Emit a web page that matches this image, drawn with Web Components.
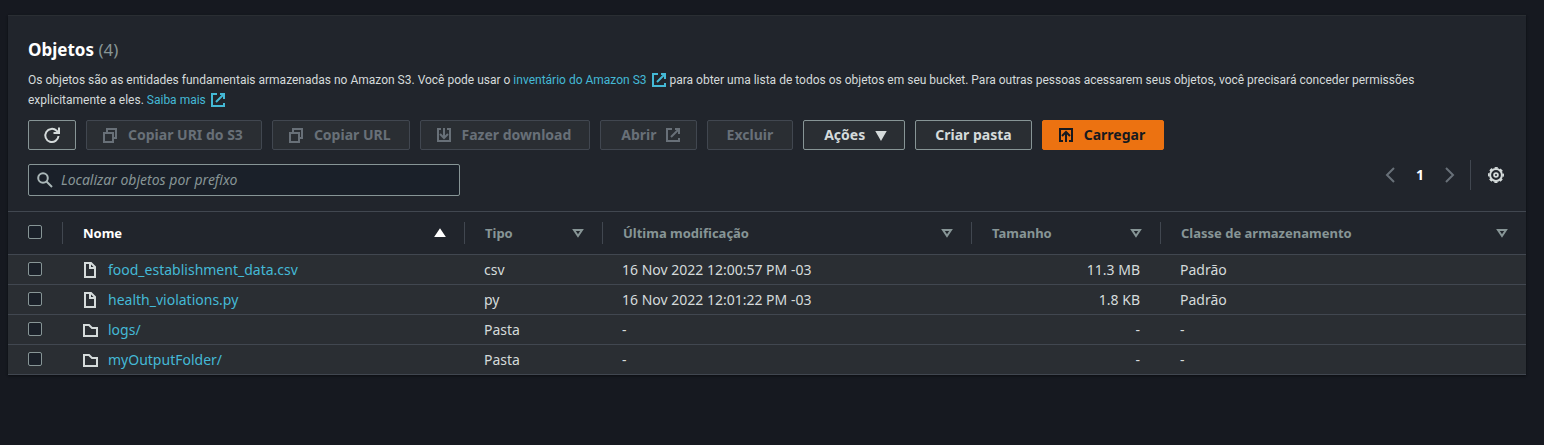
<!DOCTYPE html>
<html lang="pt-BR">
<head>
<meta charset="utf-8">
<title>Objetos do bucket</title>
<style>
body {
  margin: 0;
  padding: 15px 18px 20px 8px;
  background: #161920;
  color: #d5dbdb;
  font: 14px/20px "Noto Sans", sans-serif;
}
</style>
</head>
<body>
<objects-panel></objects-panel>

<script>
const ICONS = {
  refresh: '<path d="M14.500 9A6.600 6.600 0 1 1 12.600 3.800L14 5.200"/><path d="M15 .5v5.500h-5.500"/>',
  copy: '<path d="M2 6h9v9H2z"/><path d="M5 6V2h9v9h-3"/>',
  download: '<path d="M5 2H2v12h12V2h-3"/><path d="M8 1v9M4 7l4 4 4-4"/>',
  external: '<path d="M7 2H2v12h12v-3"/><path d="M10 2h4v5M14 2L6 10"/>',
  upload: '<path d="M5 14H2V2h12v12h-3"/><path d="M8 15V6M4 9l4-4 4 4"/>',
  search: '<circle cx="6" cy="6" r="4.800"/><path d="M9.500 9.500l5.500 5.500"/>',
  file: '<path d="M3 1h6l4 4v10H3z"/><path d="M8 1v5h5"/>',
  folder: '<path d="M2 14V3h5l3 3h5v8z"/>',
  prev: '<path d="M12 1L5 8l7 7"/>',
  next: '<path d="M4 1l7 7-7 7"/>',
  gear: '<circle cx="8" cy="8" r="5.900"/><circle cx="8" cy="8" r="7.200" stroke-width="1.600" stroke-dasharray="3.200 2.455" stroke-dashoffset="1.600"/><circle cx="8" cy="8" r="1.900" stroke-width="1.800"/>',
  down: '<path d="M4 5h8L8 12z" fill="currentColor"/>',
  up: '<path d="M4 11h8L8 5z" fill="currentColor"/>',
  sort: '<path d="M4 5h8l-4 6z"/>'
};

class UiIcon extends HTMLElement {
  connectedCallback() {
    if (this.shadowRoot) return;
    this.attachShadow({ mode: 'open' }).innerHTML = `
      <style>
        :host { display: inline-block; width: 16px; height: 16px; flex: none; }
        svg { display: block; width: 100%; height: 100%; overflow: visible; fill: none; stroke: currentColor; stroke-width: 2; }
      </style>
      <svg viewBox="0 0 16 16" aria-hidden="true">${ICONS[this.getAttribute('name')]}</svg>`;
  }
}
customElements.define('ui-icon', UiIcon);

class UiButton extends HTMLElement {
  connectedCallback() {
    if (this.shadowRoot) return;
    const label = this.getAttribute('label');
    this.attachShadow({ mode: 'open' }).innerHTML = `
      <style>
        :host { display: block; flex: none; }
        button {
          box-sizing: border-box; height: 30px; min-width: 48px; padding: 0 19px;
          display: flex; align-items: center; justify-content: center; gap: 8px;
          border: 1px solid #879596; border-radius: 2px; background: #2a2e33;
          color: #d5dbdb; font: bold 14px/20px "Noto Sans", sans-serif; white-space: nowrap;
        }
        :host([icon-start]) button { padding: 0 18px 0 15px; gap: 10px; }
        :host([icon-end]) button { padding: 0 15px 0 20px; }
        :host([icon-only]) button { padding: 0; }
        :host([primary]) button { background: #ec7211; border-color: #ec7211; color: #16191f; }
        button:disabled { color: #687078; border-color: #414750; }
      </style>
      <button type="button" ${label ? `aria-label="${label}"` : ''} ${this.hasAttribute('disabled') ? 'disabled' : ''}><slot name="start"></slot><slot></slot><slot name="end"></slot></button>`;
  }
}
customElements.define('ui-button', UiButton);

class ExternalLink extends HTMLElement {
  connectedCallback() {
    if (this.shadowRoot) return;
    this.attachShadow({ mode: 'open' }).innerHTML = `
      <style>
        :host { display: inline; }
        a { color: #44b9d6; text-decoration: none; white-space: nowrap; }
        ui-icon { vertical-align: -4px; margin-left: 4px; }
      </style>
      <a href="#"><slot></slot><ui-icon name="external"></ui-icon></a>`;
  }
}
customElements.define('external-link', ExternalLink);

class SearchField extends HTMLElement {
  connectedCallback() {
    if (this.shadowRoot) return;
    this.attachShadow({ mode: 'open' }).innerHTML = `
      <style>
        :host { display: block; }
        label {
          box-sizing: border-box; height: 32px; padding: 0 8px; display: flex; align-items: center; gap: 8px;
          border: 1px solid #879596; border-radius: 2px; background: #1a2029; color: #aab7b8;
        }
        input {
          flex: 1; min-width: 0; padding: 0; border: 0; outline: 0; background: none;
          color: #d5dbdb; font: 14px/20px "Noto Sans", sans-serif;
        }
        input::placeholder { color: #879596; opacity: 1; font-style: italic; }
      </style>
      <label><ui-icon name="search"></ui-icon><input type="text" aria-label="Localizar objetos" placeholder="${this.getAttribute('placeholder')}"></label>`;
  }
}
customElements.define('search-field', SearchField);

class PageNav extends HTMLElement {
  connectedCallback() {
    if (this.shadowRoot) return;
    this.attachShadow({ mode: 'open' }).innerHTML = `
      <style>
        :host { display: flex; align-items: center; height: 30px; }
        button {
          width: 30px; height: 30px; padding: 0; border: 0; background: none; color: #687078;
          display: flex; align-items: center; justify-content: center;
          font: bold 14px/20px "Noto Sans", sans-serif;
        }
        .current { color: #fff; }
        .divider { width: 1px; height: 30px; margin: 0 15px 0 5px; background: #414750; }
        .settings { width: 20px; color: #d5dbdb; }
      </style>
      <button type="button" aria-label="Página anterior" disabled><ui-icon name="prev"></ui-icon></button>
      <button type="button" class="current">1</button>
      <button type="button" aria-label="Próxima página" disabled><ui-icon name="next"></ui-icon></button>
      <span class="divider"></span>
      <button type="button" class="settings" aria-label="Preferências"><ui-icon name="gear"></ui-icon></button>`;
  }
}
customElements.define('page-nav', PageNav);

const OBJECTS = [
  ['file', 'food_establishment_data.csv', 'csv', '16 Nov 2022 12:00:57 PM -03', '11.3 MB', 'Padrão'],
  ['file', 'health_violations.py', 'py', '16 Nov 2022 12:01:22 PM -03', '1.8 KB', 'Padrão'],
  ['folder', 'logs/', 'Pasta', '-', '-', '-'],
  ['folder', 'myOutputFolder/', 'Pasta', '-', '-', '-']
];

class ObjectTable extends HTMLElement {
  connectedCallback() {
    if (this.shadowRoot) return;
    const heading = (text, icon) => `<th scope="col"${icon === 'up' ? ' class="sorted" aria-sort="ascending"' : ''}><div class="head"><span>${text}</span><ui-icon name="${icon}"></ui-icon></div></th>`;
    const row = ([icon, name, type, date, size, storage]) => `
      <tr>
        <td class="check"><input type="checkbox" aria-label="Selecionar ${name}"></td>
        <td><div class="name"><ui-icon name="${icon}"></ui-icon><a href="#">${name}</a></div></td>
        <td>${type}</td><td>${date}</td><td class="size">${size}</td><td>${storage}</td>
      </tr>`;
    this.attachShadow({ mode: 'open' }).innerHTML = `
      <style>
        :host { display: block; }
        table { width: 100%; table-layout: fixed; border-collapse: separate; border-spacing: 0; }
        .c-check { width: 54px; } .c-name { width: 402px; } .c-type { width: 138px; }
        .c-date { width: 369px; } .c-size { width: 189px; }
        th, td { padding: 0; text-align: left; border-bottom: 1px solid #414750; white-space: nowrap; }
        th { height: 42px; border-top: 1px solid #414750; color: #879596; font-size: 13px; }
        td { height: 29px; padding: 0 20px; background: #2a2e33; }
        .check { padding: 0 0 2px 20px; }
        th.check { height: 40px; }
        td.check { height: 27px; }
        .head { display: flex; align-items: center; justify-content: space-between; height: 22px; padding: 0 16px 0 20px; border-left: 1px solid #414750; }
        .sorted { color: #fff; }
        .size { text-align: right; }
        .name { display: flex; align-items: center; gap: 10px; }
        a { color: #44b9d6; text-decoration: none; }
        input {
          appearance: none; display: block; box-sizing: border-box; width: 14px; height: 14px; margin: 0;
          border: 1px solid #879596; border-radius: 2px; background: #1a2029;
        }
      </style>
      <table>
        <colgroup><col class="c-check"><col class="c-name"><col class="c-type"><col class="c-date"><col class="c-size"><col></colgroup>
        <thead><tr>
          <th class="check"><input type="checkbox" aria-label="Selecionar tudo"></th>
          ${heading('Nome', 'up')}${heading('Tipo', 'sort')}${heading('Última modificação', 'sort')}${heading('Tamanho', 'sort')}${heading('Classe de armazenamento', 'sort')}
        </tr></thead>
        <tbody>${OBJECTS.map(row).join('')}</tbody>
      </table>`;
  }
}
customElements.define('object-table', ObjectTable);

class ObjectsPanel extends HTMLElement {
  connectedCallback() {
    if (this.shadowRoot) return;
    this.attachShadow({ mode: 'open' }).innerHTML = `
      <style>
        :host { display: block; background: #21252c; border-top: 1px solid #2a2e33; box-shadow: 0 1px 2px #0c0e12; }
        header { padding: 19px 20px 15px; }
        h2 { margin: 0 0 5px; font-size: 17px; line-height: 30px; color: #fff; }
        h2 span { font-weight: normal; color: #879596; }
        p { margin: 0 60px 10px 0; font: 12px/20px Roboto, sans-serif; }
        .actions { display: flex; flex-wrap: wrap; gap: 10px; margin-bottom: 10px; }
        .tools { display: flex; align-items: flex-start; justify-content: space-between; gap: 20px; }
        search-field { flex: 0 1 432px; margin-top: 4px; }
      </style>
      <header>
        <h2>Objetos <span>(4)</span></h2>
        <p>Os objetos são as entidades fundamentais armazenadas no Amazon S3. Você pode usar o <external-link>inventário do Amazon S3</external-link> para obter uma lista de todos os objetos em seu bucket. Para outras pessoas acessarem seus objetos, você precisará conceder permissões explicitamente a eles. <external-link>Saiba mais</external-link></p>
        <div class="actions">
          <ui-button icon-only label="Atualizar"><ui-icon slot="start" name="refresh"></ui-icon></ui-button>
          <ui-button icon-start disabled><ui-icon slot="start" name="copy"></ui-icon>Copiar URI do S3</ui-button>
          <ui-button icon-start disabled><ui-icon slot="start" name="copy"></ui-icon>Copiar URL</ui-button>
          <ui-button icon-start disabled><ui-icon slot="start" name="download"></ui-icon>Fazer download</ui-button>
          <ui-button icon-end disabled>Abrir<ui-icon slot="end" name="external"></ui-icon></ui-button>
          <ui-button disabled>Excluir</ui-button>
          <ui-button icon-end>Ações<ui-icon slot="end" name="down"></ui-icon></ui-button>
          <ui-button>Criar pasta</ui-button>
          <ui-button icon-start primary><ui-icon slot="start" name="upload"></ui-icon>Carregar</ui-button>
        </div>
        <div class="tools">
          <search-field placeholder="Localizar objetos por prefixo"></search-field>
          <page-nav></page-nav>
        </div>
      </header>
      <object-table></object-table>`;
  }
}
customElements.define('objects-panel', ObjectsPanel);
</script>
</body>
</html>
